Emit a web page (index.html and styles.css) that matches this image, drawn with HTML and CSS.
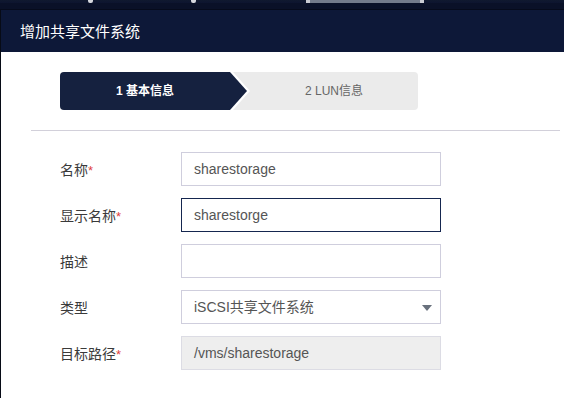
FILE: index.html
```html
<!DOCTYPE html>
<html lang="zh">
<head>
<meta charset="utf-8">
<link rel="stylesheet" href="styles.css">
</head>
<body>
<div class="topbar">
  <span class="mark m1"></span>
  <span class="mark m2"></span>
  <span class="bar"></span>
</div>
<div class="dialog">
  <div class="header">增加共享文件系统</div>
  <div class="content">
    <div class="stepper">
      <div class="step1"><div class="step1-in">1 基本信息</div></div>
      <div class="step2">2 LUN信息</div>
    </div>
    <div class="divider"></div>
    <div class="form">
      <div class="row">
        <div class="label">名称<span class="req">*</span></div>
        <div class="field">sharestorage</div>
      </div>
      <div class="row">
        <div class="label">显示名称<span class="req">*</span></div>
        <div class="field focus">sharestorge</div>
      </div>
      <div class="row">
        <div class="label">描述</div>
        <div class="field"></div>
      </div>
      <div class="row">
        <div class="label">类型</div>
        <div class="field select">iSCSI共享文件系统<span class="caret"></span></div>
      </div>
      <div class="row">
        <div class="label">目标路径<span class="req">*</span></div>
        <div class="field disabled">/vms/sharestorage</div>
      </div>
    </div>
  </div>
</div>
</body>
</html>
```
FILE: styles.css
```css
html, body {
  margin: 0;
  padding: 0;
  background: #ffffff;
  font-family: "Liberation Sans", "Noto Sans CJK SC", sans-serif;
  width: 564px;
  height: 398px;
  overflow: hidden;
}
.topbar {
  height: 9px;
  background: linear-gradient(#10192f 0, #0d1530 3px, #0a1128 3px, #0a1128 100%);
  border-bottom: 1px solid #060b1c;
  display: flex;
  align-items: flex-start;
}
.mark {
  width: 5px;
  height: 3px;
  background: #d6d8de;
  border-radius: 0 0 2px 2px;
}
.m1 { margin-left: 88px; }
.m2 { margin-left: 98px; }
.bar {
  margin-left: 110px;
  width: 118px;
  height: 3px;
  background: #737b8b;
  border-left: 4px solid #c9ccd3;
  border-right: 4px solid #c9ccd3;
  box-sizing: border-box;
}
.dialog {
  border-left: 1px solid #070b16;
  height: 388px;
}
.header {
  height: 42px;
  background: #0d1838;
  color: #ffffff;
  font-size: 15px;
  line-height: 42px;
  padding-left: 19px;
  font-family: "Noto Sans CJK SC", sans-serif;
}
.content {
  padding-top: 20px;
}
.stepper {
  margin-left: 59px;
  width: 358px;
  height: 38px;
  background: #ebebeb;
  border-radius: 4px;
  overflow: hidden;
  display: flex;
}
.step1 {
  width: 190px;
  height: 38px;
  background: #ffffff;
  clip-path: polygon(0 0, 173px 0, 190px 19px, 173px 38px, 0 38px);
  flex: none;
}
.step1-in {
  width: 187px;
  height: 38px;
  background: #15213f;
  clip-path: polygon(0 0, 170px 0, 187px 19px, 170px 38px, 0 38px);
  color: #ffffff;
  font-weight: bold;
  font-size: 12px;
  line-height: 38px;
  box-sizing: border-box;
  padding-right: 17px;
  text-align: center;
}
.step2 {
  flex: 1;
  color: #666666;
  font-size: 12px;
  line-height: 38px;
  text-align: center;
}
.divider {
  margin: 20px 4px 0 30px;
  height: 1px;
  background: #d2d0da;
}
.form {
  padding-top: 21px;
  display: flex;
  flex-direction: column;
  gap: 12px;
}
.row {
  display: flex;
  align-items: center;
  margin-left: 59px;
}
.label {
  width: 121px;
  font-size: 14px;
  color: #3a3a3a;
}
.req {
  color: #e0413c;
  font-size: 13px;
}
.field {
  width: 260px;
  height: 34px;
  box-sizing: border-box;
  border: 1px solid #cfcedd;
  padding-left: 12px;
  font-size: 14px;
  line-height: 32px;
  color: #555555;
  position: relative;
}
.field.focus {
  border-color: #15264f;
}
.field.disabled {
  background: #eeeeee;
  border-color: #dcdce4;
}
.caret {
  position: absolute;
  right: 8px;
  top: 14px;
  width: 0;
  height: 0;
  border-left: 5.5px solid transparent;
  border-right: 5.5px solid transparent;
  border-top: 6px solid #69717d;
}
```
